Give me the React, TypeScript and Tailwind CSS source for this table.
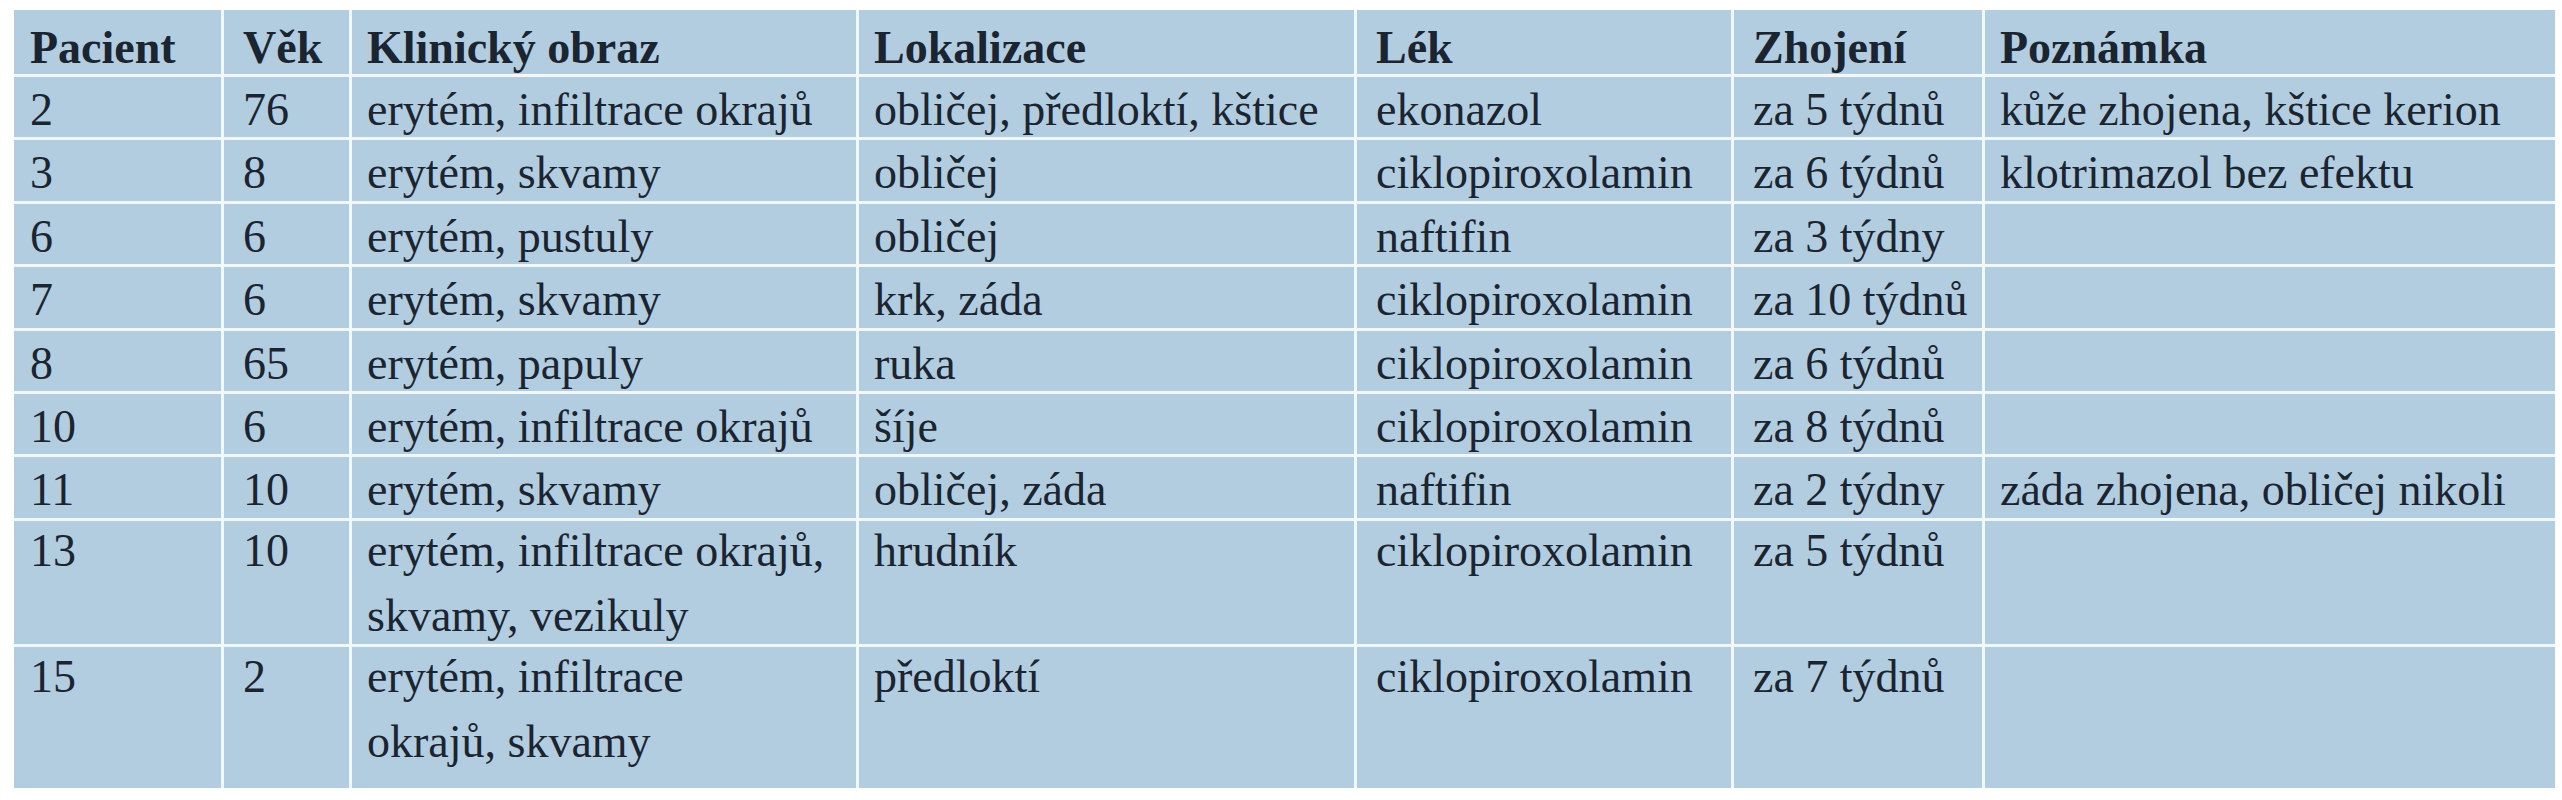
const header = ['Pacient', 'Věk', 'Klinický obraz', 'Lokalizace', 'Lék', 'Zhojení', 'Poznámka'];

const rows: (string | string[])[][] = [
  ['2', '76', 'erytém, infiltrace okrajů', 'obličej, předloktí, kštice', 'ekonazol', 'za 5 týdnů', 'kůže zhojena, kštice kerion'],
  ['3', '8', 'erytém, skvamy', 'obličej', 'ciklopiroxolamin', 'za 6 týdnů', 'klotrimazol bez efektu'],
  ['6', '6', 'erytém, pustuly', 'obličej', 'naftifin', 'za 3 týdny', ''],
  ['7', '6', 'erytém, skvamy', 'krk, záda', 'ciklopiroxolamin', 'za 10 týdnů', ''],
  ['8', '65', 'erytém, papuly', 'ruka', 'ciklopiroxolamin', 'za 6 týdnů', ''],
  ['10', '6', 'erytém, infiltrace okrajů', 'šíje', 'ciklopiroxolamin', 'za 8 týdnů', ''],
  ['11', '10', 'erytém, skvamy', 'obličej, záda', 'naftifin', 'za 2 týdny', 'záda zhojena, obličej nikoli'],
  ['13', '10', ['erytém, infiltrace okrajů,', 'skvamy, vezikuly'], 'hrudník', 'ciklopiroxolamin', 'za 5 týdnů', ''],
  ['15', '2', ['erytém, infiltrace', 'okrajů, skvamy'], 'předloktí', 'ciklopiroxolamin', 'za 7 týdnů', ''],
];

// left padding per column
const pads = ['pl-[16px]', 'pl-[19px]', 'pl-[15px]', 'pl-[15px]', 'pl-[19px]', 'pl-[19px]', 'pl-[15px]'];

const App = () => {
  return (
    <div className="min-h-screen bg-white pt-[10px] pl-[14px]">
      <div className="grid w-[2541px] grid-cols-[207px_125px_504px_495px_374px_248px_570px] grid-rows-[64px_repeat(7,60.4px)_123.7px_140.5px] gap-[3px] bg-[#f1f8fc] text-[#1a2531]">
        {header.map((h, i) => (
          <div
            key={h}
            className={`bg-[#b3cde0] pt-[5px] font-['Liberation_Serif'] text-[46px] font-bold leading-[65px] whitespace-nowrap ${pads[i]}`}
          >
            {h}
          </div>
        ))}
        {rows.map((row, r) =>
          row.map((cell, c) => (
            <div
              key={`${r}-${c}`}
              className={`bg-[#b3cde0] font-['Liberation_Serif'] text-[46px] leading-[65px] whitespace-nowrap ${pads[c]}`}
            >
              {Array.isArray(cell) ? (
                <div className="-mt-[3px]">
                  {cell.map((line) => (
                    <div key={line}>{line}</div>
                  ))}
                </div>
              ) : r >= 7 ? (
                <div className="-mt-[3px]">{cell}</div>
              ) : (
                cell
              )}
            </div>
          ))
        )}
      </div>
    </div>
  );
};

export default App;
